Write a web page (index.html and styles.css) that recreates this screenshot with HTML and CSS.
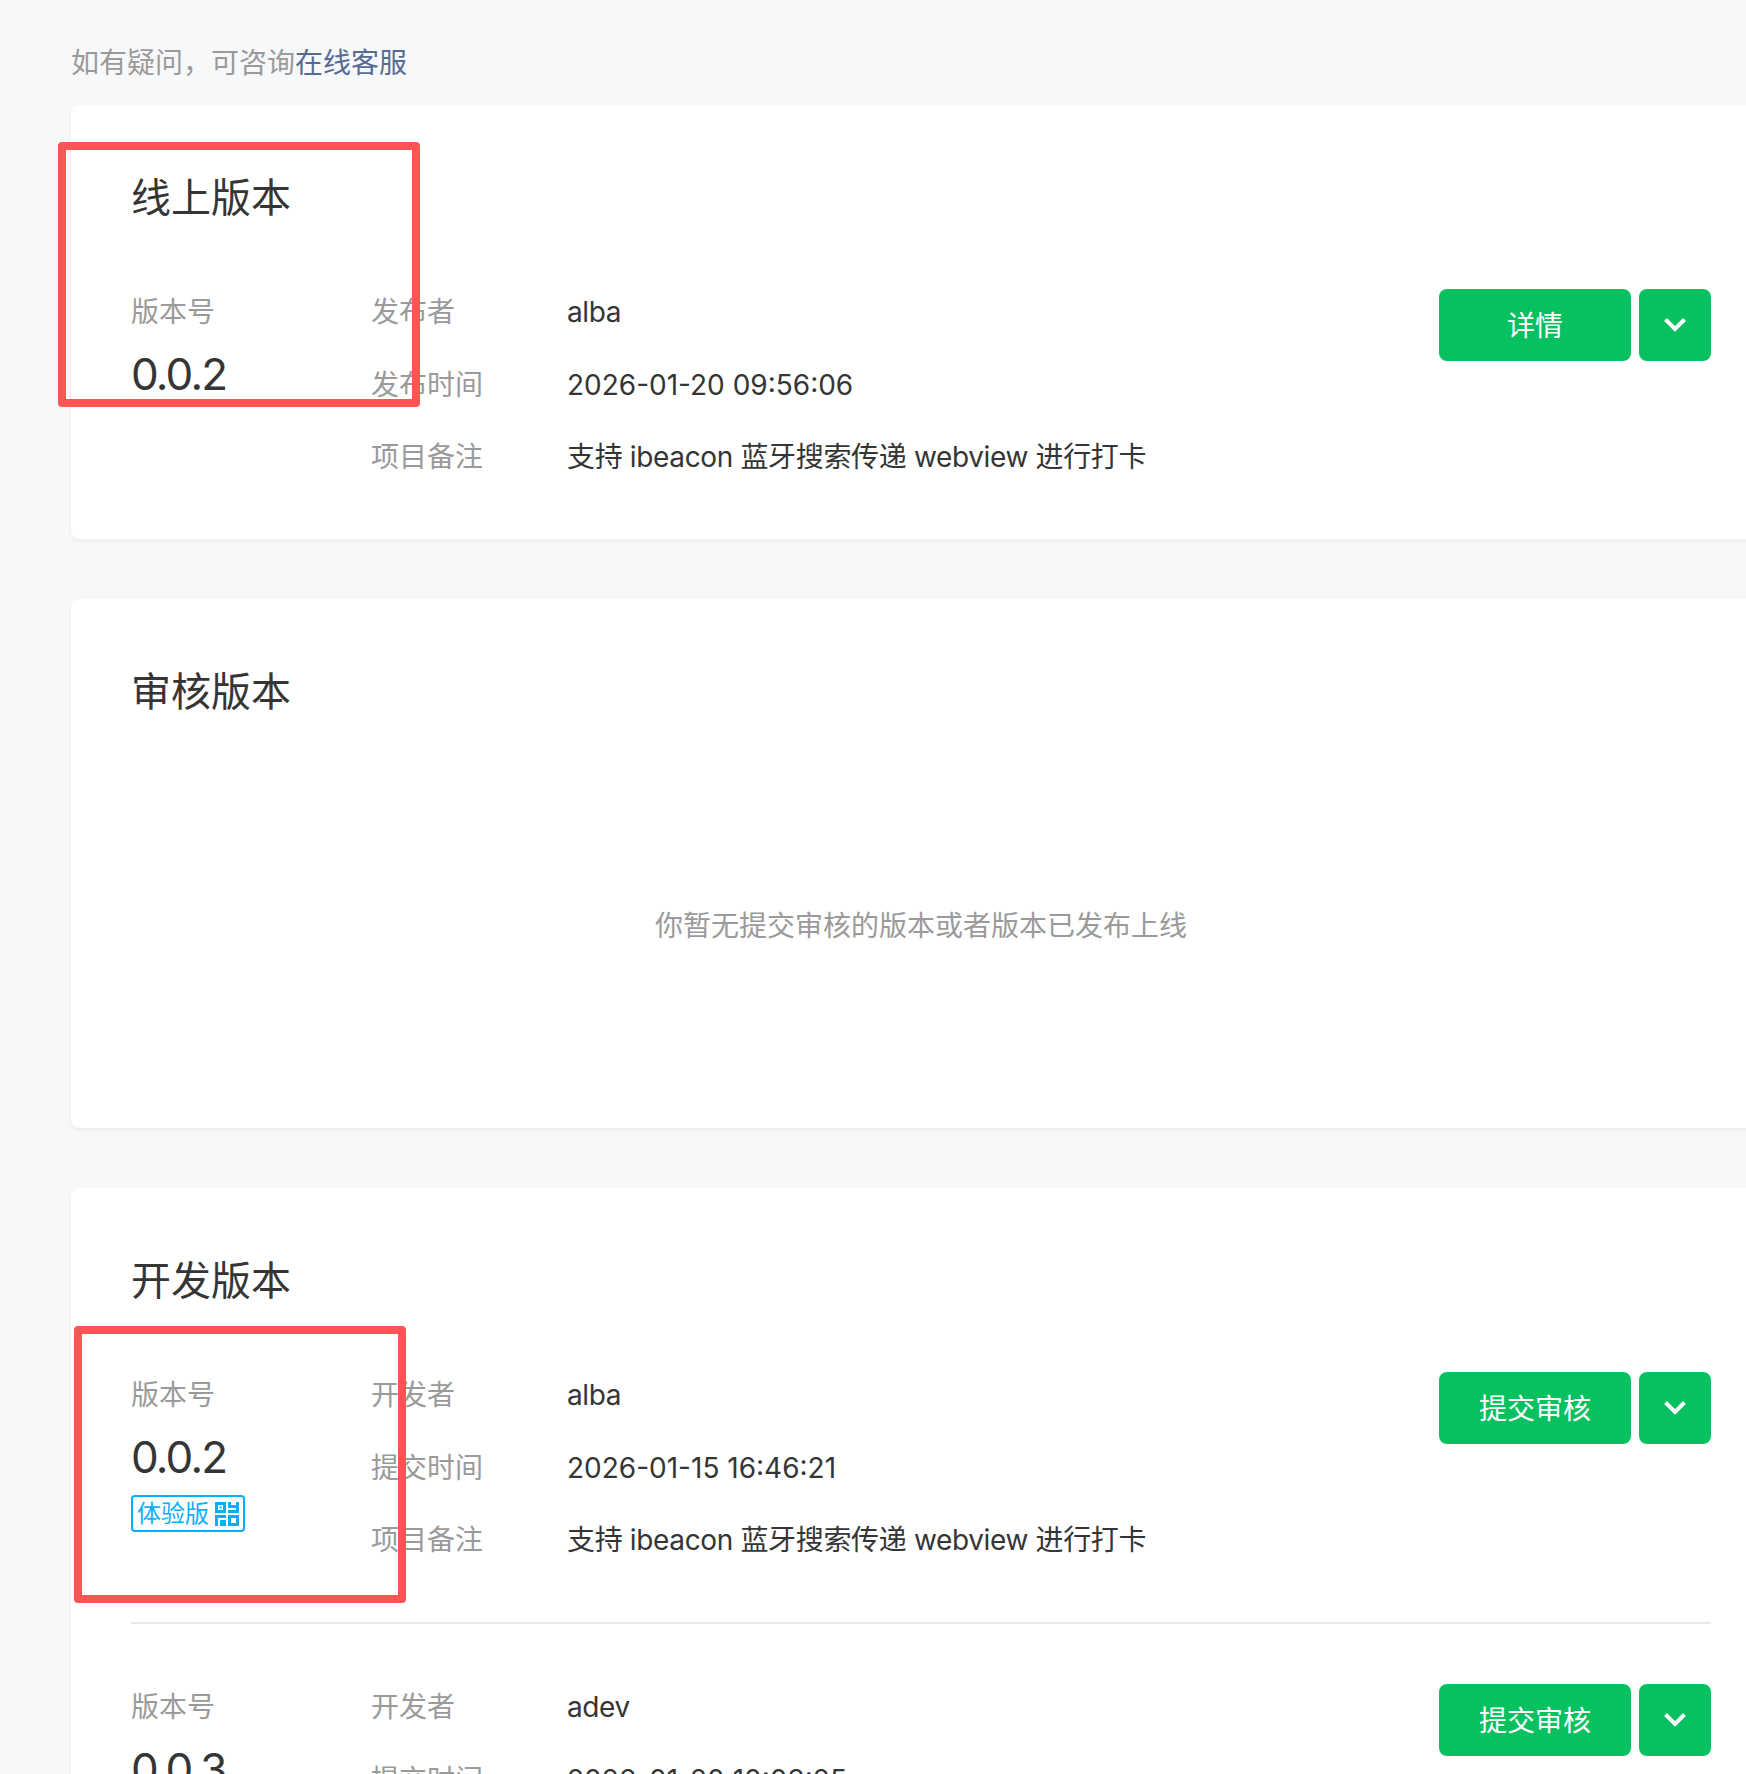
FILE: index.html
```html
<!DOCTYPE html>
<html lang="zh-CN">
<head>
<meta charset="utf-8">
<title>版本管理</title>
<link rel="stylesheet" href="styles.css">
</head>
<body>
<main class="page">
  <p class="help">如有疑问，可咨询<a class="help-link" href="#">在线客服</a></p>

  <section class="card">
    <h2 class="card-title">线上版本</h2>
    <div class="release">
      <div class="version">
        <div class="version-label">版本号</div>
        <div class="version-number">0.0.2</div>
      </div>
      <dl class="meta">
        <dt>发布者</dt><dd class="name">alba</dd>
        <dt>发布时间</dt><dd>2026-01-20 09:56:06</dd>
        <dt>项目备注</dt><dd class="note">支持 ibeacon 蓝牙搜索传递 webview 进行打卡</dd>
      </dl>
      <div class="actions">
        <button class="btn">详情</button>
        <button class="btn btn-more"><svg class="chevron" viewBox="0 0 22 14"><path d="M1.500 1.500 11 11l9.500-9.500"/></svg></button>
      </div>
    </div>
  </section>

  <section class="card">
    <h2 class="card-title">审核版本</h2>
    <div class="empty">你暂无提交审核的版本或者版本已发布上线</div>
  </section>

  <section class="card">
    <h2 class="card-title">开发版本</h2>
    <div class="release">
      <div class="version">
        <div class="version-label">版本号</div>
        <div class="version-number">0.0.2</div>
        <span class="tag">体验版<svg class="qr" viewBox="0 0 24 24"><path fill-rule="evenodd" d="M0 0h11v11H0zM3 3v5h5V3zM4.500 4.500h2v2h-2zM13 0h3v3h5V0h3v11H13V8h8V6h-8zM0 13h11v3H3v8H0zM5 18h6v6H5zM13 13h11v11H13zM16 16v5h5v-5z"/></svg></span>
      </div>
      <dl class="meta">
        <dt>开发者</dt><dd class="name">alba</dd>
        <dt>提交时间</dt><dd>2026-01-15 16:46:21</dd>
        <dt>项目备注</dt><dd class="note">支持 ibeacon 蓝牙搜索传递 webview 进行打卡</dd>
      </dl>
      <div class="actions">
        <button class="btn">提交审核</button>
        <button class="btn btn-more"><svg class="chevron" viewBox="0 0 22 14"><path d="M1.500 1.500 11 11l9.500-9.500"/></svg></button>
      </div>
    </div>
    <div class="release release-next">
      <div class="version">
        <div class="version-label">版本号</div>
        <div class="version-number">0.0.3</div>
      </div>
      <dl class="meta">
        <dt>开发者</dt><dd class="name">adev</dd>
        <dt>提交时间</dt><dd>2026-01-20 10:03:25</dd>
      </dl>
      <div class="actions">
        <button class="btn">提交审核</button>
        <button class="btn btn-more"><svg class="chevron" viewBox="0 0 22 14"><path d="M1.500 1.500 11 11l9.500-9.500"/></svg></button>
      </div>
    </div>
  </section>
</main>

<div class="mark mark-top"></div>
<div class="mark mark-dev"></div>
<div class="watermark" aria-hidden="true">7MzhMETPDF4 7MzhMETPDF4 7MzhMETPDF4 7MzhMETPDF4 7MzhMETPDF4
7MzhMETPDF4 7MzhMETPDF4 7MzhMETPDF4 7MzhMETPDF4 7MzhMETPDF4
7MzhMETPDF4 7MzhMETPDF4 7MzhMETPDF4 7MzhMETPDF4 7MzhMETPDF4
7MzhMETPDF4 7MzhMETPDF4 7MzhMETPDF4 7MzhMETPDF4 7MzhMETPDF4
7MzhMETPDF4 7MzhMETPDF4 7MzhMETPDF4 7MzhMETPDF4 7MzhMETPDF4
7MzhMETPDF4 7MzhMETPDF4 7MzhMETPDF4 7MzhMETPDF4 7MzhMETPDF4
7MzhMETPDF4 7MzhMETPDF4 7MzhMETPDF4 7MzhMETPDF4 7MzhMETPDF4
7MzhMETPDF4 7MzhMETPDF4 7MzhMETPDF4 7MzhMETPDF4 7MzhMETPDF4
7MzhMETPDF4 7MzhMETPDF4 7MzhMETPDF4 7MzhMETPDF4 7MzhMETPDF4
7MzhMETPDF4 7MzhMETPDF4 7MzhMETPDF4 7MzhMETPDF4 7MzhMETPDF4
7MzhMETPDF4 7MzhMETPDF4 7MzhMETPDF4 7MzhMETPDF4 7MzhMETPDF4
7MzhMETPDF4 7MzhMETPDF4 7MzhMETPDF4 7MzhMETPDF4 7MzhMETPDF4
7MzhMETPDF4 7MzhMETPDF4 7MzhMETPDF4 7MzhMETPDF4 7MzhMETPDF4
7MzhMETPDF4 7MzhMETPDF4 7MzhMETPDF4 7MzhMETPDF4 7MzhMETPDF4
7MzhMETPDF4 7MzhMETPDF4 7MzhMETPDF4 7MzhMETPDF4 7MzhMETPDF4
7MzhMETPDF4 7MzhMETPDF4 7MzhMETPDF4 7MzhMETPDF4 7MzhMETPDF4
7MzhMETPDF4 7MzhMETPDF4 7MzhMETPDF4 7MzhMETPDF4 7MzhMETPDF4
7MzhMETPDF4 7MzhMETPDF4 7MzhMETPDF4 7MzhMETPDF4 7MzhMETPDF4
7MzhMETPDF4 7MzhMETPDF4 7MzhMETPDF4 7MzhMETPDF4 7MzhMETPDF4</div>
</body>
</html>
```
FILE: styles.css
```css
html, body {
  margin: 0;
  height: 1774px;
  overflow: hidden;
}

body {
  position: relative;
  background: #f7f8fa;
  color: #353535;
  font-family: Inter, "Noto Sans CJK SC", sans-serif;
  font-size: 28px;
}

.page {
  padding-left: 71px;
}

.help {
  margin: 0;
  padding-top: 43px;
  height: 105px;
  line-height: 40px;
  box-sizing: border-box;
  color: #9a9a9a;
}

.help-link {
  color: #576b95;
  text-decoration: none;
}

.card {
  width: 1700px;
  box-sizing: border-box;
  padding: 60px 60px 0;
  margin-bottom: 60px;
  background: #fff;
  border-radius: 8px;
  box-shadow: 0 2px 4px rgba(0, 0, 0, 0.06);
}

.card-title {
  margin: 0 0 44px;
  font-size: 40px;
  font-weight: 400;
  line-height: 66px;
}

.release {
  display: flex;
  align-items: flex-start;
  padding-bottom: 46.5px;
}

.release-next {
  border-top: 2px solid #e7e7eb;
  padding-top: 46px;
}

.version {
  flex: none;
  width: 240px;
}

.version-label {
  color: #9a9a9a;
  line-height: 74px;
}

.version-number {
  margin-top: -3px;
  font-size: 44px;
  line-height: 56px;
  letter-spacing: -1.8px;
}

.tag {
  display: inline-flex;
  align-items: center;
  gap: 6px;
  box-sizing: border-box;
  width: 114px;
  height: 37px;
  margin-top: 10px;
  padding-left: 4px;
  border: 2px solid #06aeff;
  border-radius: 4px;
  color: #10aeff;
  font-size: 24px;
  line-height: 33px;
}

.qr {
  flex: none;
  width: 24px;
  height: 24px;
  fill: #06aeff;
}

.meta {
  flex: 1;
  display: grid;
  grid-template-columns: 196px 1fr;
  grid-auto-rows: 72.5px;
  margin: 0;
}

.meta dt {
  color: #9a9a9a;
  line-height: 74px;
}

.meta dd {
  margin: 0;
  line-height: 74px;
}

.meta .note {
  letter-spacing: -0.35px;
}

.meta .name {
  letter-spacing: -0.4px;
}

.actions {
  flex: none;
  display: flex;
  gap: 8px;
  margin-top: 14px;
}

.btn {
  width: 192px;
  height: 72px;
  padding: 0 0 2px;
  border: 0;
  border-radius: 8px;
  background: #07c160;
  color: #fff;
  font: inherit;
}

.btn-more {
  display: flex;
  align-items: center;
  justify-content: center;
  width: 72px;
  padding: 0;
}

.chevron {
  width: 22px;
  height: 14px;
  fill: none;
  stroke: #fff;
  stroke-width: 4;
}

.empty {
  height: 401px;
  padding-bottom: 4px;
  margin-top: -46px;
  display: flex;
  align-items: center;
  justify-content: center;
  color: #9a9a9a;
}

.mark {
  position: absolute;
  box-sizing: border-box;
  border: 8px solid #fe5454;
  border-radius: 4px;
}

.mark-top {
  left: 58px;
  top: 142px;
  width: 362px;
  height: 265px;
}

.mark-dev {
  left: 74px;
  top: 1326px;
  width: 332px;
  height: 277px;
}

.watermark {
  position: absolute;
  left: 27px;
  top: 9px;
  width: 2300px;
  height: 1765px;
  overflow: hidden;
  pointer-events: none;
  color: rgba(0, 0, 0, 0.018);
  font-family: "Liberation Sans", sans-serif;
  font-size: 28px;
  line-height: 91.7px;
  white-space: pre;
  word-spacing: 230px;
}
```
